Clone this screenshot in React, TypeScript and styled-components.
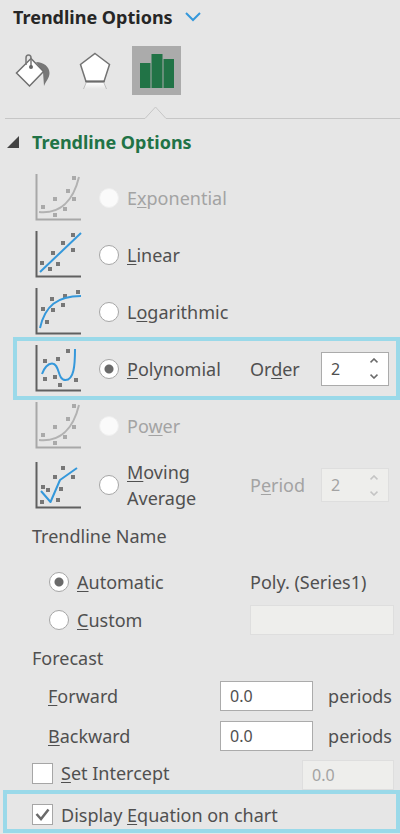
import React, { useState } from 'react';
import styled, { createGlobalStyle, css } from 'styled-components';

const ink = '#505050';
const muted = '#a3a3a3';
const blue = '#3598db';
const green = '#217346';
const highlight = '#9ad9e9';

const GlobalStyle = createGlobalStyle`
  *, *::before, *::after { box-sizing: border-box; }
  body {
    margin: 0;
    background: #e6e6e6;
    color: ${ink};
    font-family: 'Noto Sans', 'Open Sans', sans-serif;
    font-size: 18px;
    line-height: 26px;
  }
  button, input { font: inherit; color: inherit; margin: 0; }
  svg { display: block; flex: none; }
`;

const Pane = styled.main`
  display: flex;
  flex-direction: column;
  padding-bottom: 2px;
`;

const Title = styled.h1`
  display: flex;
  align-items: center;
  gap: 12px;
  height: 34px;
  margin: 0;
  padding-left: 13px;
  font-size: 18px;
  font-weight: 700;
  color: #262626;
`;

const PlainButton = styled.button`
  display: flex;
  align-items: center;
  justify-content: center;
  padding: 0;
  border: 0;
  background: none;
`;

const TabBar = styled.div`
  display: flex;
  gap: 13px;
  padding: 12px 8px 11px;
`;

const Tab = styled(PlainButton)<{ $active?: boolean }>`
  width: 49px;
  height: 49px;
  background: ${(p) => (p.$active ? '#ababab' : 'transparent')};
`;

const Divider = styled.div`
  display: flex;
  align-items: flex-end;
  height: 13px;
  padding-left: 5px;
`;

const Rule = styled.span<{ $width?: number }>`
  height: 1px;
  background: #c6c6c6;
  ${(p) => (p.$width ? css`width: ${p.$width}px;` : css`flex: 1;`)}
`;

const SectionToggle = styled(PlainButton)`
  justify-content: flex-start;
  gap: 13px;
  width: 100%;
  height: 45px;
  padding-left: 7px;
`;

const SectionTitle = styled.h2`
  margin: 0;
  font-size: 18px;
  font-weight: 700;
  color: ${green};
`;

const TypeList = styled.div`
  display: flex;
  flex-direction: column;
  padding-top: 5px;
`;

const TypeRow = styled.div<{ $tall?: boolean; $marked?: boolean }>`
  display: flex;
  align-items: center;
  height: ${(p) => (p.$tall ? 62 : 57)}px;
  padding: 0 11px 0 35px;
  ${(p) =>
    p.$marked &&
    css`
      height: 63px;
      margin: -3px 0 -3px 13px;
      padding: 0 7px 0 18px;
      border: 4px solid ${highlight};
    `}
`;

const Choice = styled.label<{ $disabled?: boolean }>`
  display: flex;
  align-items: center;
  gap: 8px;
  color: ${(p) => (p.$disabled ? muted : ink)};
`;

const TypeChoice = styled(Choice)`
  flex: 1;
  margin-left: 17px;
`;

const Lines = styled.span`
  display: flex;
  flex-direction: column;
`;

const Radio = styled.input.attrs({ type: 'radio' })`
  appearance: none;
  flex: none;
  width: 20px;
  height: 20px;
  border: 1px solid #a6a6a6;
  border-radius: 50%;
  background: #fff;
  &:checked {
    background: radial-gradient(circle, #6a6a6a 0 4px, #fff 5px);
  }
  &:disabled {
    border-color: #efefef;
    background: #fafafa;
  }
`;

const Key = styled.span`
  text-decoration: underline;
  text-decoration-thickness: 1px;
  text-underline-offset: 2px;
  text-decoration-skip-ink: none;
`;

const Side = styled.div<{ $disabled?: boolean }>`
  display: flex;
  align-items: center;
  justify-content: space-between;
  width: 139px;
  color: ${(p) => (p.$disabled ? muted : ink)};
`;

const field = css`
  border: 1px solid #ababab;
  background: #fff;
  &:disabled, &[data-disabled='true'] {
    border-color: #dedede;
    background: #eeeeec;
    color: ${muted};
  }
`;

const SpinBox = styled.span`
  ${field}
  display: flex;
  width: 68px;
  height: 34px;
`;

const SpinInput = styled.input`
  flex: 1;
  min-width: 0;
  padding: 0 0 0 9px;
  border: 0;
  background: none;
  font-size: 16px;
`;

const SpinButtons = styled.span<{ $disabled?: boolean }>`
  display: flex;
  flex-direction: column;
  width: 28px;
  color: ${(p) => (p.$disabled ? '#c4c4c4' : '#6a6a6a')};
  & > button { flex: 1; }
`;

const TextField = styled.input.attrs({ type: 'text' })<{ $width: number }>`
  ${field}
  width: ${(p) => p.$width}px;
  height: 30px;
  padding: 0 9px;
  border-radius: 0;
  font-size: 16px;
`;

const Group = styled.fieldset`
  margin: 0;
  padding: 0;
  border: 0;
`;

const Legend = styled.legend<{ $height: number; $gap?: number }>`
  display: flex;
  align-items: center;
  height: ${(p) => p.$height}px;
  margin-bottom: ${(p) => p.$gap ?? 0}px;
  padding: 0 0 0 32px;
`;

const NameRow = styled.div`
  display: flex;
  align-items: center;
  justify-content: space-between;
  height: 38px;
  padding: 0 6px 0 49px;
`;

const NameValue = styled.span`
  width: 144px;
`;

const ForecastRow = styled.div`
  display: flex;
  align-items: center;
  height: 40px;
  padding: 0 8px 0 48px;
`;

const ForecastLabel = styled.label`
  flex: 1;
`;

const Unit = styled.span`
  margin-left: 15px;
`;

const CheckRow = styled.div<{ $marked?: boolean }>`
  display: flex;
  align-items: center;
  justify-content: space-between;
  height: 34px;
  padding: 0 6px 0 32px;
  ${(p) =>
    p.$marked &&
    css`
      height: 43px;
      margin-left: 3px;
      padding: 6px 0 0 25px;
      border: 4px solid ${highlight};
    `}
`;

const InterceptField = styled(TextField)`
  align-self: flex-end;
`;

const CheckFrame = styled.span`
  display: grid;
  flex: none;
  width: 21px;
  height: 21px;
  & > * { grid-area: 1 / 1; }
  & > svg { place-self: center; pointer-events: none; visibility: hidden; }
  & > input:checked + svg { visibility: visible; }
`;

const CheckInput = styled.input.attrs({ type: 'checkbox' })`
  appearance: none;
  border: 1px solid #a6a6a6;
  background: #fff;
`;

type Kind = 'growth' | 'linear' | 'log' | 'poly' | 'moving';

const curves: Record<Kind, string> = {
  growth: 'M4 38 C24 40 38 28 44 3',
  linear: 'M5 41 L46 2',
  log: 'M5 40 C10 18 22 8 46 8',
  poly: 'M7 29 C9 23 13 18.500 17 18.500 C25 18.500 22 35 30.500 35 C39 35 40 20 40 4',
  moving: 'M6 29 L15.500 40 L25 18 L42 6',
};

const dots: Record<Kind, number[][]> = {
  growth: [[8, 33], [20, 25], [20, 41], [30, 35], [33, 17], [39, 25], [39, 4]],
  linear: [[7, 32], [15, 38], [18, 22], [23, 33], [28, 12], [38, 19], [38, 4]],
  log: [[8, 21], [12, 34], [17, 11], [18, 22], [28, 17], [30, 8], [43, 4]],
  poly: [[10, 16], [10, 34], [20, 32], [23, 14], [25, 40], [33, 6], [41, 35]],
  moving: [[7, 40], [8, 25], [13, 28], [20, 15], [23, 38], [26, 27], [28, 6], [38, 15]],
};

const ChartIcon = ({ kind, disabled }: { kind: Kind; disabled?: boolean }) => {
  const axis = disabled ? '#a8a8a8' : '#606060';
  return (
    <svg width="47" height="47" viewBox="0 0 47 47" fill="none" aria-hidden="true">
      <path d="M1.500 0V45.500H46" stroke={axis} strokeWidth="2" />
      {dots[kind].map(([x, y]) => (
        <rect key={`${x}-${y}`} x={x - 2} y={y - 2} width="4" height="4" fill={disabled ? '#aaa' : '#777'} />
      ))}
      <path d={curves[kind]} stroke={disabled ? '#b2b2b2' : blue} strokeWidth="2" strokeLinejoin="round" />
    </svg>
  );
};

const Chevron = ({ up }: { up?: boolean }) => (
  <svg width="8" height="5" viewBox="0 0 8 5" fill="none" stroke="currentColor" strokeWidth="1.6" aria-hidden="true">
    <path d={up ? 'M.5 4.3 4 1l3.5 3.3' : 'M.5.7 4 4 7.5.7'} />
  </svg>
);

const CheckMark = () => (
  <svg width="15" height="13" viewBox="0 0 15 13" fill="none" stroke="#6a6a6a" strokeWidth="2.500" aria-hidden="true">
    <path d="M1.500 6 6 11 13.500 1.500" />
  </svg>
);

const Mnemonic = ({ text, at = 0 }: { text: string; at?: number }) => (
  <span>
    {text.slice(0, at)}
    <Key>{text[at]}</Key>
    {text.slice(at + 1)}
  </span>
);

const Stepper = ({ id, disabled }: { id: string; disabled?: boolean }) => {
  const [value, setValue] = useState(2);
  return (
    <SpinBox data-disabled={!!disabled}>
      <SpinInput
        id={id}
        inputMode="numeric"
        value={value}
        disabled={disabled}
        onChange={(e) => setValue(Number(e.target.value) || 2)}
      />
      <SpinButtons $disabled={disabled}>
        <PlainButton type="button" aria-label="Increase" disabled={disabled} onClick={() => setValue(Math.min(6, value + 1))}>
          <Chevron up />
        </PlainButton>
        <PlainButton type="button" aria-label="Decrease" disabled={disabled} onClick={() => setValue(Math.max(2, value - 1))}>
          <Chevron />
        </PlainButton>
      </SpinButtons>
    </SpinBox>
  );
};

interface TypeOption {
  label: string;
  secondLine?: string;
  at: number;
  kind: Kind;
  disabled?: boolean;
  side?: { label: string; at: number; disabled?: boolean };
}

const types: TypeOption[] = [
  { label: 'Exponential', at: 1, kind: 'growth', disabled: true },
  { label: 'Linear', at: 0, kind: 'linear' },
  { label: 'Logarithmic', at: 1, kind: 'log' },
  { label: 'Polynomial', at: 0, kind: 'poly', side: { label: 'Order', at: 2 } },
  { label: 'Power', at: 2, kind: 'growth', disabled: true },
  { label: 'Moving', secondLine: 'Average', at: 0, kind: 'moving', side: { label: 'Period', at: 1, disabled: true } },
];

const FillIcon = () => (
  <svg width="36" height="34" viewBox="0 0 36 34" fill="none" aria-hidden="true">
    <path d="M21 8C29 8 34.500 13 34.500 19C34.500 24 31 27 29 32L28 18Z" fill="#777" />
    <path d="M16 4.500 28.500 17.500 14.500 32 1.500 19Z" fill="#fff" stroke="#6f6f6f" strokeWidth="1.500" />
    <path d="M11 11V4Q11 1 13.500 1T16 4V13" stroke="#777" strokeWidth="1.500" />
    <circle cx="16" cy="13" r="2" fill="#666" />
  </svg>
);

const EffectsIcon = () => (
  <svg width="32" height="38" viewBox="0 0 32 38" fill="none" aria-hidden="true">
    <defs>
      <linearGradient id="reflection" x2="0" y2="1">
        <stop stopColor="#fff" />
        <stop offset="1" stopColor="#e6e6e6" />
      </linearGradient>
    </defs>
    <path d="M7 30H25L28 37H4Z" fill="url(#reflection)" />
    <path d="M7 31 4.500 37M25 31 27.500 37" stroke="#bcbcbc" />
    <path d="M16 1.500 30.500 12.500 25 29.500H7L1.500 12.500Z" fill="#fff" stroke="#737373" strokeWidth="1.500" />
    <path d="M6.500 29.500H25.500" stroke="#6b6b6b" strokeWidth="2" />
  </svg>
);

const BarsIcon = () => (
  <svg width="34" height="34" viewBox="0 0 34 34" fill={green} aria-hidden="true">
    <path d="M0 9H10.500V34H0ZM11.500 0H22.500V34H11.500ZM23.500 5H34V34H23.500Z" />
  </svg>
);

export default function App() {
  const [type, setType] = useState('Polynomial');
  const [name, setName] = useState('Automatic');
  return (
    <>
      <GlobalStyle />
      <Pane>
        <Title>
          Trendline Options
          <PlainButton type="button" aria-label="Choose element">
            <svg width="16" height="10" viewBox="0 0 16 10" fill="none" stroke={blue} strokeWidth="2" aria-hidden="true">
              <path d="M1 1 8 8 15 1" />
            </svg>
          </PlainButton>
        </Title>
        <TabBar>
          <Tab type="button" aria-label="Fill and line"><FillIcon /></Tab>
          <Tab type="button" aria-label="Effects"><EffectsIcon /></Tab>
          <Tab type="button" aria-label="Options" $active><BarsIcon /></Tab>
        </TabBar>
        <Divider>
          <Rule $width={139} />
          <svg width="23" height="13" viewBox="0 0 23 13" fill="none" stroke="#c6c6c6" aria-hidden="true">
            <path d="M0 12.500H1L11.500 1 22 12.500H23" />
          </svg>
          <Rule />
        </Divider>
        <SectionToggle type="button" aria-expanded="true">
          <svg width="12" height="12" viewBox="0 0 12 12" fill="#444" aria-hidden="true">
            <path d="M12 0V12H0Z" />
          </svg>
          <SectionTitle>Trendline Options</SectionTitle>
        </SectionToggle>

        <TypeList role="radiogroup" aria-label="Trendline type">
          {types.map((t) => (
            <TypeRow key={t.label} $marked={t.label === 'Polynomial'} $tall={t.kind === 'moving'}>
              <ChartIcon kind={t.kind} disabled={t.disabled} />
              <TypeChoice $disabled={t.disabled}>
                <Radio name="type" checked={type === t.label} disabled={t.disabled} onChange={() => setType(t.label)} />
                <Lines>
                  <Mnemonic text={t.label} at={t.at} />
                  {t.secondLine && <span>{t.secondLine}</span>}
                </Lines>
              </TypeChoice>
              {t.side && (
                <Side $disabled={t.side.disabled}>
                  <label htmlFor={t.side.label}>
                    <Mnemonic text={t.side.label} at={t.side.at} />
                  </label>
                  <Stepper id={t.side.label} disabled={t.side.disabled} />
                </Side>
              )}
            </TypeRow>
          ))}
        </TypeList>

        <Group>
          <Legend $height={40} $gap={7}>Trendline Name</Legend>
          <NameRow>
            <Choice>
              <Radio name="name" checked={name === 'Automatic'} onChange={() => setName('Automatic')} />
              <Mnemonic text="Automatic" />
            </Choice>
            <NameValue>Poly. (Series1)</NameValue>
          </NameRow>
          <NameRow>
            <Choice>
              <Radio name="name" checked={name === 'Custom'} onChange={() => setName('Custom')} />
              <Mnemonic text="Custom" />
            </Choice>
            <TextField $width={144} aria-label="Custom name" disabled={name !== 'Custom'} />
          </NameRow>
        </Group>

        <Group>
          <Legend $height={37}>Forecast</Legend>
          {['Forward', 'Backward'].map((label) => (
            <ForecastRow key={label}>
              <ForecastLabel htmlFor={label}><Mnemonic text={label} /></ForecastLabel>
              <TextField id={label} $width={93} defaultValue="0.0" />
              <Unit>periods</Unit>
            </ForecastRow>
          ))}
        </Group>

        <CheckRow>
          <Choice>
            <CheckFrame>
              <CheckInput />
              <CheckMark />
            </CheckFrame>
            <Mnemonic text="Set Intercept" />
          </Choice>
          <InterceptField $width={92} aria-label="Intercept" defaultValue="0.0" disabled />
        </CheckRow>
        <CheckRow $marked>
          <Choice>
            <CheckFrame>
              <CheckInput defaultChecked />
              <CheckMark />
            </CheckFrame>
            <Mnemonic text="Display Equation on chart" at={8} />
          </Choice>
        </CheckRow>
      </Pane>
    </>
  );
}
